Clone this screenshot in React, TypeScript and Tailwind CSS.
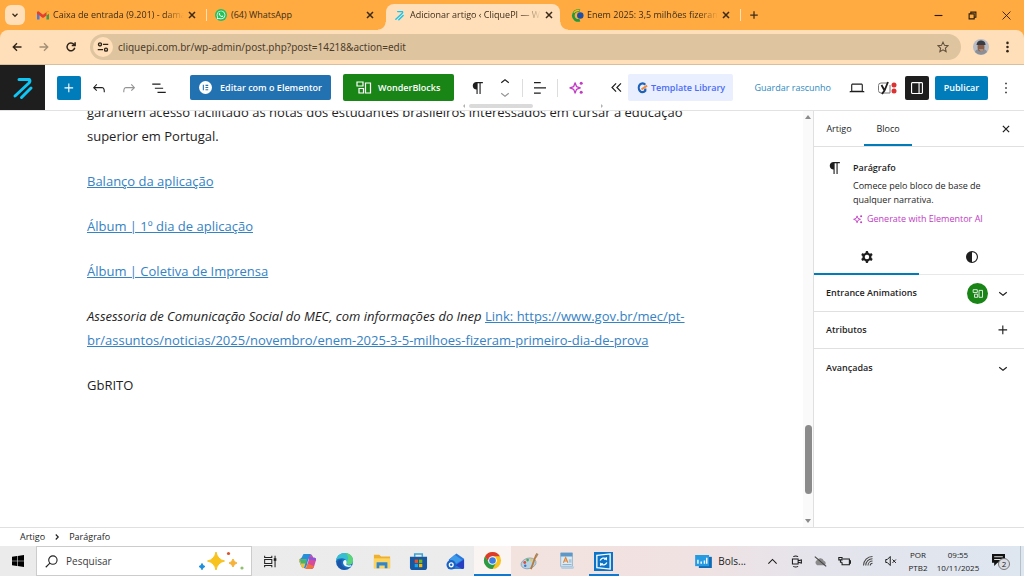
import type { ReactNode } from "react";
import { FaWhatsapp } from "react-icons/fa";

const wp = {
  paragraph:
    "m9.99609 14v-.2251l.00391.0001v6.225h1.5v-14.5h2.5v14.5h1.5v-14.5h3v-1.5h-8.50391c-2.76142 0-5 2.23858-5 5 0 2.7614 2.23858 5 5 5z",
  undo: "M18.3 11.7c-.6-.6-1.4-.9-2.3-.9H6.7l2.9-3.3-1.1-1-4.5 5L8.5 16l1-1-2.7-2.7H16c.5 0 .9.2 1.3.5 1 1 1 3.4 1 4.5v.3h1.5v-.2c0-1.5 0-4.3-1.5-5.7z",
  redo: "M15.6 6.5l-1.1 1 2.9 3.3H8c-.9 0-1.7.3-2.3.9-1.4 1.5-1.4 4.2-1.4 5.6v.2h1.5v-.3c0-1.1 0-3.5 1-4.5.3-.3.7-.5 1.3-.5h9.2L14.5 15l1.1 1.1 4.6-4.6-4.6-5z",
  list: "M3 6h11v1.5H3V6Zm3.5 5.5h11V13h-11v-1.5ZM21 17H10v1.5h11V17Z",
  plus: "M11 12.5V17.5H12.5V12.5H17.5V11H12.5V6H11V11H6V12.5H11Z",
  down: "M17.5 11.6L12 16l-5.5-4.4.9-1.2L12 14l4.5-3.6 1 1.2z",
  up: "M6.5 12.4L12 8l5.5 4.4-.9 1.2L12 10l-4.5 3.6-1-1.2z",
  align: "M13 5.5H4V4h9v1.5Zm7 7H4V11h16v1.5Zm-7 7H4V18h9v1.5Z",
  desktop:
    "M20.5 16h-.7V8c0-1.1-.9-2-2-2H6.2c-1.1 0-2 .9-2 2v8h-.7c-.8 0-1.5.7-1.5 1.5h20c0-.8-.7-1.5-1.5-1.5zM5.7 8c0-.3.2-.5.5-.5h11.6c.3 0 .5.2.5.5v7.6H5.7V8z",
  drawer:
    "M18 4H6c-1.1 0-2 .9-2 2v12c0 1.1.9 2 2 2h12c1.1 0 2-.9 2-2V6c0-1.1-.9-2-2-2zm-4 14.5H6c-.3 0-.5-.2-.5-.5V6c0-.3.2-.5.5-.5h8v13zm4.5-.5c0 .3-.2.5-.5.5h-2.5v-13H18c.3 0 .5.2.5.5v12z",
  more: "M13 19h-2v-2h2v2zm0-6h-2v-2h2v2zm0-6h-2V5h2v2z",
  cog: "M10.289 4.836A1 1 0 0111.275 4h1.306a1 1 0 01.987.836l.244 1.466c.787.26 1.503.679 2.108 1.218l1.393-.522a1 1 0 011.216.437l.653 1.13a1 1 0 01-.23 1.273l-1.148.944a6.025 6.025 0 010 2.435l1.149.946a1 1 0 01.23 1.272l-.653 1.13a1 1 0 01-1.216.437l-1.394-.522c-.605.54-1.32.958-2.108 1.218l-.244 1.466a1 1 0 01-.987.836h-1.306a1 1 0 01-.986-.836l-.244-1.466a5.995 5.995 0 01-2.108-1.218l-1.394.522a1 1 0 01-1.217-.436l-.653-1.131a1 1 0 01.23-1.272l1.149-.946a6.026 6.026 0 010-2.435l-1.148-.944a1 1 0 01-.23-1.272l.653-1.131a1 1 0 011.217-.437l1.393.522a5.994 5.994 0 012.108-1.218l.244-1.466zM14.929 12a3 3 0 11-6 0 3 3 0 016 0z",
  styles:
    "M20 12a8 8 0 1 1-16 0 8 8 0 0 1 16 0Zm-1.5 0a6.5 6.5 0 0 1-6.5 6.5v-13a6.5 6.5 0 0 1 6.5 6.5Z",
};

function WpIcon({ name, className = "size-[18px]" }: { name: keyof typeof wp; className?: string }) {
  return (
    <svg viewBox="0 0 24 24" className={className} fill="currentColor" aria-hidden="true">
      <path fillRule="evenodd" clipRule="evenodd" d={wp[name]} />
    </svg>
  );
}

function IconButton({ label, className, children }: { label: string; className: string; children: ReactNode }) {
  return (
    <button type="button" aria-label={label} className={`flex shrink-0 items-center justify-center ${className}`}>
      {children}
    </button>
  );
}

function Stroke({ d, className, width = 1.2, box = "0 0 16 16" }: { d: string; className: string; width?: number; box?: string }) {
  return (
    <svg viewBox={box} className={className} fill="none" stroke="currentColor" strokeWidth={width} aria-hidden="true">
      <path d={d} />
    </svg>
  );
}

function CliqueLogo({ className }: { className: string }) {
  return (
    <svg viewBox="0 0 22 24" className={className} fill="none" stroke="#0fc6f5" strokeWidth="3" strokeLinecap="round" strokeLinejoin="round" aria-hidden="true">
      <path d="M7 3.500h10.500q1 1.500-.5 3.500L3 20" />
      <path d="M19 12 9.500 21.500" />
    </svg>
  );
}

function Wonder({ className }: { className: string }) {
  return (
    <svg viewBox="0 0 16 13" className={className} fill="none" stroke="currentColor" strokeWidth="1.2" aria-hidden="true">
      <path d="M1 1h6v4H1zM3 7.500h4.500v4.500H3zM9.500 2h5v10h-5z" />
    </svg>
  );
}

function Sparkles({ className }: { className: string }) {
  return (
    <svg viewBox="0 0 16 16" className={className} aria-hidden="true">
      <path d="M6.500 3 8 7l4 1.500L8 10l-1.500 4L5 10 1 8.500 5 7z" fill="none" stroke="#c13bc4" strokeWidth="1.400" strokeLinejoin="round" />
      <circle cx="13" cy="3.500" r="1.600" fill="#c13bc4" />
      <circle cx="13" cy="13" r="1.600" fill="#c13bc4" />
    </svg>
  );
}

function Gmail() {
  return (
    <svg viewBox="0 0 12 9" className="h-[9px] w-3 shrink-0" aria-hidden="true">
      <path d="M0 1v7.500h2.500V3z" fill="#4a7be0" />
      <path d="M12 1v7.500H9.500V3z" fill="#3a9d55" />
      <path d="M0 .8 1.500.2 6 3.700 10.500.2 12 .8v2L6 7 0 2.800z" fill="#e0402f" />
      <path d="M9.500 1 10.500.2 12 .8v2L9.500 4.500z" fill="#efb32c" />
    </svg>
  );
}

function BrazilIcon() {
  return (
    <svg viewBox="0 0 14 14" className="size-[13px] shrink-0" aria-hidden="true">
      <path d="M9.500 2A5.300 5.300 0 1 0 9.500 12" fill="none" stroke="#229a3b" strokeWidth="3" />
      <path d="M9 1.800A5.500 5.500 0 0 0 3 4" fill="none" stroke="#f3c21b" strokeWidth="1.500" />
      <circle cx="10" cy="7" r="3.500" fill="#1f4fa5" />
    </svg>
  );
}

function Tab({ icon, title, fade, active }: { icon: ReactNode; title: string; fade?: boolean; active?: boolean }) {
  const mask = fade ? "[mask-image:linear-gradient(to_right,black_85%,transparent)]" : "";
  const look = active ? "rounded-t-lg bg-[#ffdfb9]" : "";
  return (
    <div className={`relative mt-1 flex h-[26px] w-[174px] shrink-0 items-center pr-[3px] pb-1 pl-2 ${look}`}>
      {active && (
        <>
          <span className="absolute bottom-0 -left-2 size-2 bg-[radial-gradient(circle_at_0_0,#ffab42_7px,#ffdfb9_8px)]" />
          <span className="absolute -right-2 bottom-0 size-2 bg-[radial-gradient(circle_at_100%_0,#ffab42_7px,#ffdfb9_8px)]" />
        </>
      )}
      <span className="flex w-4 shrink-0 items-center">{icon}</span>
      <a href="#tab" className={`w-[131px] overflow-hidden whitespace-nowrap ${mask}`}>
        {title}
      </a>
      <IconButton label="Fechar separador" className="ml-auto size-4">
        <Stroke d="M4 4l8 8M12 4l-8 8" className="size-3 text-[#3a2a16]" width={2} />
      </IconButton>
    </div>
  );
}

function TitleBar() {
  return (
    <header className="flex h-[30px] shrink-0 bg-[#ffab42] text-[9px] text-[#3c2c18]">
      <IconButton label="Pesquisar separadores" className="mt-[5px] mr-1 ml-[5px] size-5 rounded-md bg-[#ffdfb9]">
        <Stroke d="M4 6l4 4 4-4" className="size-[10px]" width={2} />
      </IconButton>
      <Tab icon={<Gmail />} title="Caixa de entrada (9.201) - dama" fade />
      <span className="mt-[9px] ml-[3px] h-3 w-px bg-[#ffdfb9]" />
      <Tab
        icon={
          <span className="flex size-3 items-center justify-center rounded-full bg-[#25c05a]">
            <FaWhatsapp className="size-[10px] text-white" />
          </span>
        }
        title="(64) WhatsApp"
      />
      <span className="w-[5px]" />
      <Tab icon={<CliqueLogo className="size-[11px]" />} title="Adicionar artigo ‹ CliquePI — W" fade active />
      <span className="w-[3px]" />
      <Tab icon={<BrazilIcon />} title="Enem 2025: 3,5 milhões fizeram" fade />
      <span className="mt-[9px] ml-[3px] h-3 w-px bg-[#ffdfb9]" />
      <IconButton label="Novo separador" className="mt-[5px] ml-[3px] size-5">
        <Stroke d="M8 2v12M2 8h12" className="size-[10px]" width={2} />
      </IconButton>
      <div className="ml-auto flex text-[#2b1d0c]">
        <IconButton label="Minimizar" className="h-[30px] w-[34px]">
          <Stroke d="M1 8h14" className="size-[9px]" width={2} />
        </IconButton>
        <IconButton label="Restaurar" className="h-[30px] w-[34px]">
          <Stroke d="M2 5h9v9H2zM5 5V2h9v9h-3" className="size-[9px]" width={2} />
        </IconButton>
        <IconButton label="Fechar" className="h-[30px] w-[35px]">
          <Stroke d="M1 1l14 14M15 1L1 15" className="size-[9px]" width={1.6} />
        </IconButton>
      </div>
    </header>
  );
}

function AddressBar() {
  return (
    <div className="shrink-0 bg-[#ffab42]">
      <div className="flex h-[35px] items-center rounded-t-lg border-b border-[#d9bf9c] bg-[#ffdfb9] text-[#2f2417]">
        <IconButton label="Recuar" className="ml-[5px] w-[23px]">
          <Stroke d="M14 8H3M8 3L3 8l5 5" className="size-3" width={1.8} />
        </IconButton>
        <IconButton label="Avançar" className="ml-1 w-[23px] text-[#a58f74]">
          <Stroke d="M2 8h11M8 3l5 5-5 5" className="size-3" width={1.8} />
        </IconButton>
        <IconButton label="Recarregar" className="ml-1 w-[23px]">
          <Stroke d="M13 9a5.200 5.200 0 1 1-1.200-4.600L13.500 6M13.500 1.500V6H9" className="size-3" width={2} />
        </IconButton>
        <div className="ml-2 flex h-[26px] min-w-0 flex-1 items-center rounded-full bg-[#dfc4a0] px-[3px]">
          <IconButton label="Informações do site" className="size-5 rounded-full bg-[#ffdfb9]">
            <svg viewBox="0 0 16 16" className="size-3" fill="none" stroke="currentColor" strokeWidth="1.800" aria-hidden="true">
              <circle cx="4" cy="4.500" r="2" />
              <circle cx="12" cy="11.500" r="2" />
              <path d="M8 4.500h7M1 11.500h7" />
            </svg>
          </IconButton>
          <input
            aria-label="Endereço"
            defaultValue="cliquepi.com.br/wp-admin/post.php?post=14218&action=edit"
            className="ml-[5px] min-w-0 flex-1 bg-transparent font-['Noto_Sans',sans-serif] text-[10px] text-[#4c3d2b] outline-none"
          />
          <IconButton label="Marcador" className="mr-[7px] size-4">
            <Stroke d="M8 1.500l2 4.300 4.700.5-3.500 3.200 1 4.700L8 11.800l-4.200 2.400 1-4.700L1.300 6.300 6 5.800z" className="size-3 text-[#5f4e39]" width={1.4} />
          </IconButton>
        </div>
        <IconButton label="Perfil" className="ml-3 size-4">
          <svg viewBox="0 0 16 16" className="size-4" aria-hidden="true">
            <circle cx="8" cy="8" r="8" fill="#b9bcc4" />
            <path d="M2 13c1-3 3-3 6-3s5 0 6 3a8 8 0 0 1-12 0z" fill="#8a8f98" />
            <ellipse cx="8" cy="8" rx="3.500" ry="4.500" fill="#8a5d48" />
            <path d="M3.500 6C4 2.500 6 1.500 8 1.500s4.500 1 4.500 4.500z" fill="#3a3c44" />
            <path d="M5.500 10h5v2l-2.500 1z" fill="#a98f80" />
          </svg>
        </IconButton>
        <IconButton label="Menu do Chrome" className="mr-2 ml-[9px] w-[18px]">
          <svg viewBox="0 0 4 16" className="h-3 w-[3px]" fill="currentColor" aria-hidden="true">
            <circle cx="2" cy="2.500" r="1.700" />
            <circle cx="2" cy="8" r="1.700" />
            <circle cx="2" cy="13.500" r="1.700" />
          </svg>
        </IconButton>
      </div>
    </div>
  );
}

function EditorHeader() {
  return (
    <div className="flex h-[46px] shrink-0 items-center border-b border-[#e2e2e2] bg-white text-[#1e1e1e]">
      <a href="#site" aria-label="CliquePI" className="flex h-full w-[45px] shrink-0 items-center justify-center bg-[#1e1e1e]">
        <CliqueLogo className="h-6 w-[22px]" />
      </a>
      <IconButton label="Adicionar bloco" className="ml-3 size-6 rounded-xs bg-[#007cba] text-white">
        <WpIcon name="plus" />
      </IconButton>
      <IconButton label="Desfazer" className="ml-[3px] w-[30px]">
        <WpIcon name="undo" />
      </IconButton>
      <IconButton label="Refazer" className="w-[30px] text-[#949494]">
        <WpIcon name="redo" />
      </IconButton>
      <IconButton label="Vista de lista" className="w-[30px]">
        <WpIcon name="list" />
      </IconButton>
      <button type="button" className="ml-4 flex h-[25px] w-[141px] shrink-0 items-center gap-2 rounded-xs bg-[#2271b1] pl-[9px] text-[9px] font-semibold whitespace-nowrap text-white">
        <svg viewBox="0 0 12 12" className="size-[13px] shrink-0" aria-hidden="true">
          <circle cx="6" cy="6" r="6" fill="white" />
          <path d="M4 3.500v5M6 4h2.500M6 6h2.500M6 8h2.500" stroke="#2271b1" strokeWidth="1" />
        </svg>
        Editar com o Elementor
      </button>
      <button type="button" className="ml-3 flex h-[27px] w-[111px] shrink-0 items-center gap-[6px] rounded-xs bg-[#1a8517] pl-[13px] text-[9px] font-semibold text-white">
        <Wonder className="h-[13px] w-4 shrink-0" />
        WonderBlocks
      </button>
      <div className="relative ml-[9px] flex h-full w-[140px] shrink-0 items-center">
        <IconButton label="Parágrafo" className="w-[30px]">
          <WpIcon name="paragraph" />
        </IconButton>
        <div className="flex w-6 flex-col items-center">
          <IconButton label="Mover para cima" className="h-3">
            <WpIcon name="up" />
          </IconButton>
          <IconButton label="Mover para baixo" className="h-3 text-[#949494]">
            <WpIcon name="down" />
          </IconButton>
        </div>
        <span className="mx-[5px] h-[18px] w-px bg-[#dddddd]" />
        <IconButton label="Alinhar" className="w-6">
          <WpIcon name="align" />
        </IconButton>
        <span className="mx-[5px] h-[18px] w-px bg-[#dddddd]" />
        <IconButton label="Elementor AI" className="w-[26px]">
          <Sparkles className="size-[15px]" />
        </IconButton>
        <div className="absolute right-0 bottom-[2px] left-0 flex items-center text-[#b0b0b0]">
          <span className="size-0 border-y-2 border-r-2 border-y-transparent border-r-current" />
          <span className="ml-1 h-1 w-16 rounded-full bg-[#dadada]" />
          <span className="ml-auto size-0 border-y-2 border-l-2 border-y-transparent border-l-current" />
        </div>
      </div>
      <IconButton label="Recolher ferramentas" className="ml-1 w-[18px]">
        <Stroke d="M7.500 3l-5 5 5 5M13.500 3l-5 5 5 5" className="size-[13px]" width={1.5} />
      </IconButton>
      <button type="button" className="ml-[3px] flex h-[27px] w-[105px] shrink-0 items-center gap-[3px] rounded-xs bg-[#e9effe] pl-2 text-[9px] font-semibold whitespace-nowrap text-[#4a6cf7]">
        <svg viewBox="0 0 12 14" className="h-[13px] w-3 shrink-0" fill="none" aria-hidden="true">
          <path d="M9.500 4A4 4.800 0 1 0 9.500 10.500V8" stroke="#1d62b8" strokeWidth="2.400" />
          <path d="M5.500 9 11.500 5" stroke="#f28a3c" strokeWidth="2" />
        </svg>
        Template Library
      </button>
      <button type="button" className="ml-auto shrink-0 text-[9px] font-medium whitespace-nowrap text-[#2c8abf]">
        Guardar rascunho
      </button>
      <IconButton label="Ver" className="ml-4 w-5">
        <WpIcon name="desktop" />
      </IconButton>
      <IconButton label="Yoast SEO" className="ml-[9px] w-[22px]">
        <svg viewBox="0 0 20 14" className="h-[14px] w-5" fill="none" aria-hidden="true">
          <path d="M11 2H4a2.500 2.500 0 0 0-2.500 2.500v5A2.500 2.500 0 0 0 4 12h9V4" stroke="#777" strokeWidth="1" />
          <path d="M4.500 4 7.500 9.500M11 1 7.500 9.500 5 13" stroke="#1e1e1e" strokeWidth="1.800" />
          <circle cx="17" cy="4" r="2.500" fill="#dc3232" />
          <circle cx="17" cy="10" r="2.500" fill="#dc3232" />
        </svg>
      </IconButton>
      <IconButton label="Definições" className="ml-[7px] size-6 rounded-xs bg-[#1e1e1e] text-white">
        <WpIcon name="drawer" />
      </IconButton>
      <button type="button" className="ml-[6px] h-6 w-[53px] shrink-0 rounded-xs bg-[#007cba] text-[9px] font-semibold text-white">
        Publicar
      </button>
      <IconButton label="Opções" className="mr-[9px] ml-[9px] w-[18px]">
        <WpIcon name="more" />
      </IconButton>
    </div>
  );
}

const link = "text-[#3582c4] underline";

function Article() {
  return (
    <main className="flex min-w-0 flex-1 flex-col justify-end overflow-hidden bg-white pb-[130px] pl-[87px]">
      <article className="flex w-[612px] flex-col gap-[21px] text-[13px] leading-6 text-[#1e1e1e]">
        <p>garantem acesso facilitado às notas dos estudantes brasileiros interessados em cursar a educação superior em Portugal.</p>
        <p><a href="#balanco" className={link}>Balanço da aplicação</a></p>
        <p><a href="#dia1" className={link}>Álbum | 1º dia de aplicação</a></p>
        <p><a href="#coletiva" className={link}>Álbum | Coletiva de Imprensa</a></p>
        <p>
          <em>Assessoria de Comunicação Social do MEC, com informações do Inep</em>{" "}
          <a href="#mec" className={link}>
            Link: https://www.gov.br/mec/pt-br/assuntos/noticias/2025/novembro/enem-2025-3-5-milhoes-fizeram-primeiro-dia-de-prova
          </a>
        </p>
        <p>GbRITO</p>
      </article>
    </main>
  );
}

function ScrollTrack() {
  return (
    <div className="flex w-[10px] shrink-0 flex-col items-center bg-[#fafafa] py-1" aria-hidden="true">
      <span className="size-0 border-x-[3px] border-b-4 border-x-transparent border-b-[#8b8b8b]" />
      <span className="mt-auto mb-[25px] h-[69px] w-[7px] rounded-full bg-[#8b8b8b]" />
      <span className="size-0 border-x-[3px] border-t-4 border-x-transparent border-t-[#8b8b8b]" />
    </div>
  );
}

function Panel({ title, icon, badge }: { title: string; icon: "down" | "plus"; badge?: boolean }) {
  return (
    <button type="button" className="flex h-[37px] items-center border-b border-[#e0e0e0] px-3 text-left font-semibold last:border-b-0">
      {title}
      {badge && (
        <span className="mr-[6px] ml-auto flex size-[21px] items-center justify-center rounded-full bg-[#1a8517] text-white">
          <Wonder className="h-[9px] w-3" />
        </span>
      )}
      <WpIcon name={icon} className={badge ? "size-[18px]" : "ml-auto size-[18px]"} />
    </button>
  );
}

function Sidebar() {
  return (
    <aside className="flex w-[211px] shrink-0 flex-col border-l border-[#e0e0e0] bg-white text-[9px] text-[#1e1e1e]">
      <div className="flex h-9 items-stretch border-b border-[#e0e0e0] font-medium">
        <button type="button" className="w-[50px]">Artigo</button>
        <button type="button" className="w-12 border-b-2 border-[#007cba] pt-[2px]">Bloco</button>
        <IconButton label="Fechar painel" className="mr-[9px] ml-auto w-[18px]">
          <Stroke d="M3 3l10 10M13 3L3 13" className="size-[10px]" width={2} />
        </IconButton>
      </div>
      <div className="flex h-[93px] gap-[9px] pt-3 pl-3">
        <WpIcon name="paragraph" className="size-[18px] shrink-0" />
        <div className="flex flex-col items-start">
          <h2 className="leading-[17px] font-semibold">Parágrafo</h2>
          <p className="mt-[3px] w-[140px] leading-[14px]">Comece pelo bloco de base de qualquer narrativa.</p>
          <button type="button" className="mt-1 flex items-center gap-1 leading-4 whitespace-nowrap text-[#c13bc4]">
            <Sparkles className="size-[10px]" />
            Generate with Elementor AI
          </button>
        </div>
      </div>
      <div className="flex h-[35px] shrink-0 border-b border-[#e8e8e8]">
        <IconButton label="Definições do bloco" className="-mb-px w-[105px] border-b-2 border-[#007cba]">
          <WpIcon name="cog" />
        </IconButton>
        <IconButton label="Estilos" className="flex-1">
          <WpIcon name="styles" />
        </IconButton>
      </div>
      <Panel title="Entrance Animations" icon="down" badge />
      <Panel title="Atributos" icon="plus" />
      <Panel title="Avançadas" icon="down" />
    </aside>
  );
}

function TaskIcon({ label, state = "", children }: { label: string; state?: string; children: ReactNode }) {
  return (
    <button type="button" aria-label={label} className={`relative flex h-full w-[37px] shrink-0 items-center justify-center ${state}`}>
      {children}
    </button>
  );
}

function Art({ className = "size-[19px]", children }: { className?: string; children: ReactNode }) {
  return (
    <svg viewBox="0 0 20 20" className={className} fill="none" aria-hidden="true">
      {children}
    </svg>
  );
}

function Taskbar() {
  return (
    <footer className="flex h-[30px] shrink-0 items-center bg-[linear-gradient(to_right,#ebebeb_0%,#ececec_46%,#f3e3df_50%,#f0e2e2_68%,#e4e4ec_80%,#dee6f0_100%)] text-[#1b1b1b]">
      <IconButton label="Iniciar" className="h-full w-[36px]">
        <svg viewBox="0 0 12 12" className="size-3" fill="black" aria-hidden="true">
          <path d="M0 1.700 5 1v4.700H0zM5.600.9 12 0v5.700H5.600zM0 6.300h5V11l-5-.7zM5.600 6.300H12V12l-6.400-.9z" />
        </svg>
      </IconButton>
      <label className="flex h-full w-[216px] shrink-0 items-center border border-[#cccccc] bg-white pr-[7px] pl-2">
        <svg viewBox="0 0 14 14" className="size-[13px] shrink-0" fill="none" stroke="#222" strokeWidth="1.200" aria-hidden="true">
          <circle cx="8.500" cy="5.500" r="4.500" />
          <path d="M5.300 8.700.8 13.200" />
        </svg>
        <input aria-label="Pesquisar" placeholder="Pesquisar" className="ml-2 w-[110px] bg-transparent text-[10px] outline-none placeholder:text-[#3c3c3c]" />
        <svg viewBox="0 0 46 20" className="ml-auto h-5 w-[46px] shrink-0" aria-hidden="true">
          <path d="M18 1q1.500 7.500 8.500 9-7 1.500-8.500 9-1.500-7.500-8.500-9 7-1.500 8.500-9z" fill="#f8c21f" stroke="#f8c21f" strokeLinejoin="round" />
          <path d="M4 12.500q.8 2.500 3 3-2.200.7-3 3.200-.8-2.500-3-3.200 2.200-.5 3-3z" fill="#1f8fdc" stroke="#1f8fdc" />
          <path d="M35 8q1 3.200 4 4-3 .8-4 4-1-3.200-4-4 3-.8 4-4z" fill="#f5b33a" stroke="#f5b33a" />
          <circle cx="30.500" cy="2.500" r="1.600" fill="#d9532c" />
          <circle cx="44" cy="17" r="1.600" fill="#8fc06a" />
        </svg>
      </label>
      <TaskIcon label="Vista de tarefas">
        <Art className="size-[13px]">
          <path d="M1 1v3h11V1M1 19v-3h11v3M1 7h11v6H1zM17 1v18" stroke="#222" strokeWidth="1.600" />
          <path d="M15 5h4v4h-4z" fill="#222" />
        </Art>
      </TaskIcon>
      <TaskIcon label="Copilot">
        <Art>
          <path d="M6.500 2h6q2 0 2.500 2l1 3h-5l-2 8q-.5 2-2.500 2Q4 17 3 14L1 9q-.5-2 1.500-2h1.800L5 4q.3-2 1.500-2z" fill="#2b86e0" />
          <path d="M1 8.500Q1 7 3 7h6L7 15q-.5 2-2 2Q3.500 16 3 14z" fill="#e9c33f" />
          <path d="M4.500 5Q5 2 7 2h5L10 8H2z" fill="#2490d8" />
          <path d="M2 8h7.500l-1 4H3z" fill="#45b36b" />
          <path d="M13 3q2 0 3 3h1.500q2 .5 1.500 2.500L17 15q-.7 3-3.500 3H7q2-.5 2.500-3l2-8q.5-3 1.500-4z" fill="#d64b9b" />
          <path d="m10 12 7 3q-1 3-3.500 3H7q2-.5 3-6z" fill="#f0723c" />
          <path d="m12 5 5 1h.8Q19.500 6.500 19 9l-8-1z" fill="#8a55d8" />
        </Art>
      </TaskIcon>
      <TaskIcon label="Microsoft Edge">
        <Art>
          <circle cx="10" cy="10" r="9" fill="#1671c2" />
          <path d="M1.200 8.500C2 3.500 6 1 10 1c5.500 0 9 4 9 8 0 3-2 4.500-4.500 4.500-2 0-3-.8-2.300-1.800C13 9.500 11 6.500 7.500 6.500c-3 0-5.300 1-6.300 2z" fill="#37bfd0" />
          <path d="M11 1c5 .3 8 4 8 8 0 3-2 4.500-4.500 4.500-2 0-3-.8-2.300-1.800C14 9 15 4 11 1z" fill="#5bd47b" />
          <path d="M7.500 8C5 12 8 17.500 14 17.200c-5 3.500-11 .5-12-5C2 9 5 7.500 7.500 8z" fill="#1c55a8" />
          <path d="M12.200 11.500c-1 1.500.5 3.200 4.600 2.500l.8.700C14 17 8.500 15 8.500 11c0-1.500 1-2.500 2-2.500 1.500 0 2.200 1.700 1.700 3z" fill="#f1f7fb" />
        </Art>
      </TaskIcon>
      <TaskIcon label="Explorador de Ficheiros">
        <Art className="size-[18px]">
          <path d="M1 3h6l2 2h10v13H1z" fill="#efb02e" />
          <path d="M1 7h18v11H1z" fill="#fcd45f" />
          <path d="M4 18v-6.500h12V18h-3v-3H7v3z" fill="#2f86cf" />
        </Art>
      </TaskIcon>
      <TaskIcon label="Microsoft Store">
        <Art>
          <path d="M6 5V2h8v3" stroke="#34a4d8" strokeWidth="1.600" />
          <path d="M1 5h18v11q0 3-3 3H4q-3 0-3-3z" fill="#1758a0" />
          <path d="M6 8h3.500v3.500H6z" fill="#f25022" />
          <path d="M10.500 8H14v3.500h-3.500z" fill="#7fba00" />
          <path d="M6 12.500h3.500V16H6z" fill="#16a5ee" />
          <path d="M10.500 12.500H14V16h-3.500z" fill="#ffb900" />
        </Art>
      </TaskIcon>
      <TaskIcon label="Outlook">
        <Art>
          <path d="M3 8 11 1.500 19 7v9q0 2-2 2H5q-2 0-2-2z" fill="#2a78dc" />
          <path d="m9 3 8 5.500L6 15 4 8z" fill="#3d9bea" />
          <path d="m19 8-9 6 7 4q2 0 2-2z" fill="#273fc0" />
          <circle cx="5.500" cy="13.500" r="5" fill="#1762c4" />
          <circle cx="5.500" cy="13.500" r="2" stroke="white" strokeWidth="1.400" />
        </Art>
      </TaskIcon>
      <TaskIcon label="Google Chrome" state="border-b-2 border-[#0f78d0] bg-[#faf4f2]">
        <Art>
          <circle cx="10" cy="10" r="9" fill="#f7c31f" />
          <path d="M2.200 5.500A9 9 0 0 1 17.800 5.500H10L6 12z" fill="#dd3b2c" />
          <path d="M2.200 5.500A9 9 0 0 0 10 19l4-7-8 .3z" fill="#2a9b47" />
          <circle cx="10" cy="10" r="4.600" fill="white" />
          <circle cx="10" cy="10" r="3.500" fill="#3b7de0" />
        </Art>
      </TaskIcon>
      <TaskIcon label="Paint">
        <Art>
          <ellipse cx="9" cy="12" rx="8" ry="5.500" transform="rotate(-15 9 12)" fill="#b9d3e2" stroke="#7f9eb2" strokeWidth=".8" />
          <circle cx="5" cy="11" r="1.500" fill="#d9503f" />
          <circle cx="8" cy="8.500" r="1.400" fill="#56a64c" />
          <circle cx="5.500" cy="14.500" r="1.300" fill="#3e74c9" />
          <circle cx="12" cy="8.500" r="1.300" fill="#eec544" />
          <path d="M17 3 11.500 18" stroke="#b97739" strokeWidth="1.800" />
          <path d="m16 5 1-4 2.500 1-2 4z" fill="#a98a66" />
        </Art>
      </TaskIcon>
      <TaskIcon label="WordPad">
        <Art className="size-[18px]">
          <path d="M3 1h13v15H3z" fill="#d9ebf7" stroke="#7fa5c0" strokeWidth=".8" />
          <path d="M3 1h13v4H3z" fill="#5d98c8" />
          <path d="m6 12 2.500-6 2.500 6M7 10h3" stroke="#e58638" strokeWidth="1.300" />
          <path d="M12 9h3M12 11h3M5 14h10" stroke="#7ea5c4" />
          <path d="M3 16h15q0 3-3 3H6q-3 0-3-3z" fill="#b7cfdf" />
        </Art>
      </TaskIcon>
      <TaskIcon label="Assistência remota">
        <Art>
          <path d="M0 0h20v20H0z" fill="#0b74c8" />
          <path d="M3 3.500 17 2v16L3 16.500z" stroke="white" strokeWidth="1.400" />
          <path d="M6.500 9a4 4 0 0 1 6.500-1.500V5.500M13 7.500h-2.500M13.500 11a4 4 0 0 1-6.500 1.500v2M7 12.500h2.500" stroke="white" strokeWidth="1.400" />
        </Art>
        <span className="absolute bottom-0 h-[2px] w-[30px] bg-[#0f78d0]" />
      </TaskIcon>
      <div className="ml-auto flex h-full shrink-0 items-center">
        <button type="button" className="flex items-center gap-[6px] text-[10px]">
          <svg viewBox="0 0 18 14" className="h-[13px] w-[17px]" aria-hidden="true">
            <path d="M4 2h14v12H4z" fill="#126bb5" />
            <path d="M0 0h15v12H0z" fill="#279be2" />
            <path d="M3 9.500V5M6.500 9.500V7M10 9.500V6M12.500 9.500V3" stroke="white" strokeWidth="1.500" />
          </svg>
          Bols...
        </button>
        <IconButton label="Ícones ocultos" className="ml-[14px] w-6">
          <Stroke d="M2 11l6-6 6 6" className="size-[11px]" width={1.6} />
        </IconButton>
        <IconButton label="Reunião" className="w-6">
          <Stroke d="M3 5h7v6H3zM10 7l4-1v4l-4-1M4 2q3-1.500 6 0M4 14q3 1.500 6 0" className="size-[13px]" width={1.3} />
        </IconButton>
        <IconButton label="OneDrive" className="w-6">
          <svg viewBox="0 0 16 16" className="size-[13px]" aria-hidden="true">
            <path d="M4 12.500a3.500 3.500 0 0 1 0-6.500 4.500 4.500 0 0 1 8 1 3 3 0 0 1 1 5.500z" fill="#8a8a8a" />
            <path d="M1 2 15 14" stroke="#444" strokeWidth="1.400" />
          </svg>
        </IconButton>
        <IconButton label="Bateria" className="w-6">
          <Stroke d="M6 5h8v7H5V9M14 7h1.500v3H14M1 3h4v3H1zM3 6v3h2" className="size-[13px]" width={1.3} />
        </IconButton>
        <IconButton label="Rede" className="w-6">
          <Stroke d="M2 14A12 12 0 0 1 14 2M5 14a9 9 0 0 1 9-9M8 14a6 6 0 0 1 6-6M11 14a3 3 0 0 1 3-3" className="size-3 text-[#444]" width={1.4} />
        </IconButton>
        <IconButton label="Som" className="w-[22px]">
          <Stroke d="M1 6h2l4-4v12l-4-4H1zM10 6l4.500 4.500M14.500 6 10 10.500" className="size-3" width={1.3} />
        </IconButton>
        <button type="button" className="ml-[5px] w-[22px] text-center text-[8px] leading-[13px]">
          POR
          <br />
          PTB2
        </button>
        <button type="button" className="ml-1 w-[50px] text-center text-[8px] leading-[13px]">
          09:55
          <br />
          10/11/2025
        </button>
        <button type="button" aria-label="Notificações" className="relative ml-[9px] flex w-[22px] items-center">
          <svg viewBox="0 0 12 12" className="mb-1 size-[13px]" aria-hidden="true">
            <path d="M0 1h12v8H5l-3 3V9H0z" fill="#111" />
            <path d="M2 3.500h8M2 6h8" stroke="#ddd" />
          </svg>
          <span className="absolute top-[5px] left-[6px] flex size-3 items-center justify-center rounded-full border border-[#777] bg-[#d9dde3] text-[8px] leading-none">
            2
          </span>
        </button>
        <span className="mr-[3px] ml-[6px] h-full w-px bg-[#b9bfc8]" />
      </div>
    </footer>
  );
}

export default function App() {
  return (
    <div className="flex h-screen flex-col overflow-hidden bg-white font-['Open_Sans','Noto_Sans',sans-serif]">
      <TitleBar />
      <AddressBar />
      <EditorHeader />
      <div className="flex min-h-0 flex-1">
        <Article />
        <ScrollTrack />
        <Sidebar />
      </div>
      <nav aria-label="Trilho do bloco" className="flex h-[19px] shrink-0 items-center border-t border-[#e0e0e0] bg-white pl-5 text-[9px] text-[#1e1e1e]">
        <a href="#artigo">Artigo</a>
        <Stroke d="M6 4l4 4-4 4" className="mx-[7px] size-[10px]" width={1.8} />
        <a href="#paragrafo">Parágrafo</a>
      </nav>
      <Taskbar />
    </div>
  );
}
